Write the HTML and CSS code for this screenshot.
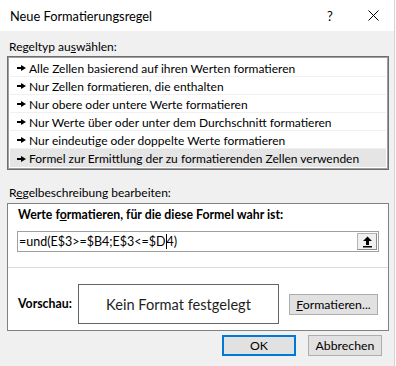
FILE: index.html
```html
<!DOCTYPE html>
<html lang="de">
<head>
    <meta charset="UTF-8">
    <title>Neue Formatierungsregel</title>
    <link rel="stylesheet" href="styles.css">
</head>
<body>
    <div class="dialog">
        <div class="titlebar">
            <span class="title">Neue Formatierungsregel</span>
            <span class="help">?</span>
            <span class="close">
                <svg width="11" height="11" viewBox="0 0 11 11"><path d="M0.5 0.5 L10.5 10.5 M10.5 0.5 L0.5 10.5" stroke="#000" stroke-width="1"/></svg>
            </span>
        </div>

        <div class="content">
            <div class="label">Regeltyp au<u>s</u>wählen:</div>
            <ul class="rule-list">
                <li><span class="bullet"></span>Alle Zellen basierend auf ihren Werten formatieren</li>
                <li><span class="bullet"></span>Nur Zellen formatieren, die enthalten</li>
                <li><span class="bullet"></span>Nur obere oder untere Werte formatieren</li>
                <li><span class="bullet"></span>Nur Werte über oder unter dem Durchschnitt formatieren</li>
                <li><span class="bullet"></span>Nur eindeutige oder doppelte Werte formatieren</li>
                <li class="selected"><span class="bullet"></span>Formel zur Ermittlung der zu formatierenden Zellen verwenden</li>
            </ul>

            <div class="label second">R<u>e</u>gelbeschreibung bearbeiten:</div>
            <div class="rule-box">
                <div class="formula-part">
                    <div class="bold-label">Werte f<u>o</u>rmatieren, für die diese Formel wahr ist:</div>
                    <div class="formula-input">
                        <span class="formula-text">=und(E$3&gt;=$B4;E$3&lt;=$D<span class="caret"></span>4)</span>
                        <span class="collapse-btn">
                            <svg width="11" height="12" viewBox="0 0 11 12"><path d="M5.5 0.5 L10 5 L7 5 L7 9 L4 9 L4 5 L1 5 Z" fill="#000"/><rect x="1" y="10" width="9" height="1.5" fill="#000"/></svg>
                        </span>
                    </div>
                </div>
                <div class="preview-part">
                    <span class="bold-label">Vorschau:</span>
                    <div class="preview">Kein Format festgelegt</div>
                    <button class="btn format-btn"><u>F</u>ormatieren...</button>
                </div>
            </div>

            <div class="actions">
                <button class="btn ok">OK</button>
                <button class="btn">Abbrechen</button>
            </div>
        </div>
    </div>
</body>
</html>
```

FILE: styles.css
```css
* {
    margin: 0;
    padding: 0;
    box-sizing: border-box;
}
body {
    font-family: 'Lato', 'Liberation Sans', sans-serif;
    font-size: 12px;
    color: #000;
    background: #fff;
    width: 396px;
    height: 366px;
    overflow: hidden;
}
u {
    text-decoration: underline;
    text-underline-offset: 1px;
}
.dialog {
    width: 395px;
    height: 366px;
    background: #f0f0f0;
    border-right: 1px solid #d4d4d4;
}
.titlebar {
    height: 31px;
    background: #fff;
    display: flex;
    align-items: center;
    padding-left: 10px;
}
.title {
    flex: 1;
    font-size: 12.8px;
}
.help {
    width: 41px;
    font-size: 13px;
}
.close {
    width: 26px;
    display: flex;
    align-items: center;
}
.content {
    padding: 8px 0 0 7px;
}
.label {
    height: 17px;
    line-height: 16px;
    padding-left: 2px;
}
.label.second {
    margin-top: 15px;
    height: 18px;
}
.rule-list {
    list-style: none;
    width: 382px;
    background: #fff;
    border: 1px solid #6e6e6e;
    box-shadow: inset 0 0 0 1px #a0a0a0;
    padding: 2px;
}
.rule-list li {
    height: 18px;
    line-height: 17px;
    padding: 1px 0 0 7px;
    border-bottom: 1px solid #f0f0f0;
    display: flex;
    align-items: center;
    white-space: nowrap;
}
.rule-list li.selected {
    background: #e5e5e5;
    border-bottom: none;
}
.bullet {
    display: inline-block;
    width: 9px;
    height: 6px;
    margin-right: 3px;
    position: relative;
    background:
        linear-gradient(#000, #000) 0 2px / 5px 2px no-repeat;
}
.bullet::after {
    content: '';
    position: absolute;
    left: 4px;
    top: 0;
    border-left: 5px solid #000;
    border-top: 3px solid transparent;
    border-bottom: 3px solid transparent;
}
.rule-box {
    width: 382px;
    height: 128px;
    background: #fff;
    border: 1px solid #828282;
}
.formula-part {
    height: 64px;
    padding: 3px 0 0 9px;
    border-bottom: 1px solid #dcdcdc;
}
.bold-label {
    font-weight: bold;
    font-size: 12.3px;
    line-height: 16px;
    padding-left: 1px;
}
.formula-input {
    margin-top: 8px;
    width: 362px;
    height: 21px;
    border: 1px solid #a0a0a0;
    display: flex;
    align-items: center;
    justify-content: space-between;
    padding-left: 1px;
    font-size: 12.5px;
}
.caret {
    display: inline-block;
    width: 1px;
    height: 15px;
    background: #000;
    vertical-align: -3px;
}
.collapse-btn {
    width: 20px;
    height: 17px;
    margin-right: 1px;
    background: #f0f0f0;
    border: 1px solid #b4b4b4;
    border-right-color: #8c8c8c;
    border-bottom-color: #8c8c8c;
    display: flex;
    align-items: center;
    justify-content: center;
}
.preview-part {
    display: flex;
    align-items: center;
    padding: 16px 0 0 9px;
}
.preview-part .bold-label {
    width: 61px;
}
.preview {
    width: 201px;
    height: 40px;
    border: 1px solid #646464;
    display: flex;
    align-items: center;
    justify-content: center;
    font-size: 14.6px;
    color: #1e1e1e;
}
.btn {
    font-family: inherit;
    font-size: 12.3px;
    height: 21px;
    background: #e1e1e1;
    border: 1px solid #adadad;
    color: #000;
}
.format-btn {
    width: 89px;
    margin-left: 10px;
}
.actions {
    display: flex;
    justify-content: flex-end;
    gap: 12px;
    padding: 4px 12px 0 0;
}
.actions .btn {
    width: 74px;
}
.actions .ok {
    border: 2px solid #0078d7;
}
```
